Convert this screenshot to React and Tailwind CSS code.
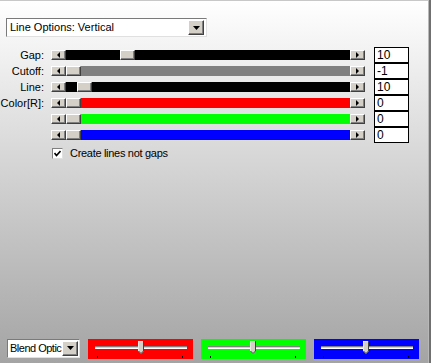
import React from 'react';

// classic 3d button face used by scroll arrows, thumbs and combo arrows
const face = 'bg-[#d4d0c8] border-t border-l border-t-white border-l-white border-b border-r border-b-[#404040] border-r-[#404040] shadow-[inset_-1px_-1px_0_#808080]';

const Tri = ({ dir }) => {
    const pts = {
        left: '3,0 3,6 0,3',
        right: '0,0 0,6 3,3',
        down: '0,0 7,0 3.5,4',
    }[dir];
    const w = dir === 'down' ? 7 : 3;
    const h = dir === 'down' ? 4 : 6;
    return (
        <svg width={w} height={h} viewBox={`0 0 ${w} ${h}`} className="block">
            <polygon points={pts} fill="#000" />
        </svg>
    );
};

const ArrowBtn = ({ dir }) => (
    <div className={`${face} w-[15px] h-full flex items-center justify-center shrink-0`}>
        <Tri dir={dir} />
    </div>
);

const Slider = ({ track, pos }) => (
    <div className="flex h-[10px] w-[314px]">
        <ArrowBtn dir="left" />
        <div className={`flex-1 flex ${track}`}>
            <div className="shrink-0" style={{ width: pos }} />
            <div className={`${face} w-[15px] h-full shrink-0`} />
        </div>
        <ArrowBtn dir="right" />
    </div>
);

const rows = [
    { label: 'Gap:', track: 'bg-black', pos: 54, value: '10' },
    { label: 'Cutoff:', track: 'bg-[#808080]', pos: 0, value: '-1' },
    { label: 'Line:', track: 'bg-black', pos: 11, value: '10' },
    { label: 'Color[R]:', track: 'bg-[#ff0000]', pos: 0, value: '0' },
    { label: '', track: 'bg-[#00ff00]', pos: 0, value: '0' },
    { label: '', track: 'bg-[#0000ff]', pos: 0, value: '0' },
];

const ColorSlider = ({ bg, thumb }) => (
    <div className={`relative w-[105px] h-[20px] ${bg}`}>
        <div className="absolute left-[7px] right-[6px] top-[7px] h-[3px] border-t border-t-[#808080] border-b border-b-white bg-[#d4d0c8]" />
        <div className="absolute bottom-[1px] left-[9px] w-px h-[2px] bg-black" />
        <div className="absolute bottom-[1px] right-[10px] w-px h-[2px] bg-black" />
        <div className="absolute top-[2px] w-[6px] h-[13px]" style={{ left: thumb }}>
            <svg width="6" height="13" viewBox="0 0 6 13" className="block">
                <polygon points="0,0 6,0 6,10 3,13 0,10" fill="#d4d0c8" />
                <polyline points="0,10 0,0 6,0" fill="none" stroke="#fff" strokeWidth="1" />
                <polyline points="5.5,0 5.5,10 3,12.5 0.5,10" fill="none" stroke="#404040" strokeWidth="1" />
            </svg>
        </div>
    </div>
);

export default function App() {
    return (
        <div className="w-[431px] h-[363px] flex font-['Liberation_Sans',Arial,sans-serif] text-[11px] text-black">
            <div className="flex-1 flex flex-col bg-gradient-to-b from-[#ffffff] to-[#a4a4a4] border-t border-t-[#c8c8c8] border-r border-r-[#b8b8b8]">
                {/* top combo */}
                <div className="mt-[17px] ml-[6px] w-[201px] h-[19px] flex items-center bg-white border-t border-l border-t-[#7a7a7a] border-l-[#7a7a7a] border-b border-r border-b-[#e0e0e0] border-r-[#e0e0e0]">
                    <span className="flex-1 pl-[3px] leading-none">Line Options: Vertical</span>
                    <div className="h-[15px] w-[16px] mr-[2px]">
                        <div className={`${face} h-full w-full flex items-center justify-center`}>
                            <Tri dir="down" />
                        </div>
                    </div>
                </div>

                {/* slider rows */}
                <div className="mt-[10px] flex flex-col">
                    {rows.map((r, i) => (
                        <div key={i} className="flex items-center h-[16px]">
                            <div className="w-[44px] text-right leading-none">{r.label}</div>
                            <div className="ml-[7px]">
                                <Slider track={r.track} pos={r.pos} />
                            </div>
                            <div className="ml-[9px] w-[35px] h-[16px] bg-white border border-black text-[12px] leading-[14px] pl-[2px]">
                                {r.value}
                            </div>
                        </div>
                    ))}
                </div>

                {/* checkbox */}
                <div className="mt-[5px] ml-[52px] flex items-center gap-[7px]">
                    <div className="w-[11px] h-[11px] bg-white border-t border-l border-t-[#808080] border-l-[#808080] border-b border-r border-b-[#e0e0e0] border-r-[#e0e0e0] flex items-center justify-center">
                        <svg width="7" height="7" viewBox="0 0 7 7" className="block">
                            <polyline points="0.5,3 2.5,5.5 6.5,1" fill="none" stroke="#000" strokeWidth="1.6" />
                        </svg>
                    </div>
                    <span className="leading-none tracking-[-0.3px]">Create lines not gaps</span>
                </div>

                <div className="flex-1" />

                {/* bottom bar */}
                <div className="flex items-center mb-[4px] ml-[7px]">
                    <div className="w-[73px] h-[19px] flex items-center bg-white border-t border-l border-t-[#7a7a7a] border-l-[#7a7a7a] border-b border-r border-b-[#e0e0e0] border-r-[#e0e0e0]">
                        <span className="flex-1 pl-[2px] whitespace-nowrap leading-none tracking-[-0.5px]">Blend Optic</span>
                        <div className="h-[15px] w-[16px] mr-[1px] shrink-0">
                            <div className={`${face} h-full w-full flex items-center justify-center`}>
                                <Tri dir="down" />
                            </div>
                        </div>
                    </div>
                    <div className="ml-[8px] flex gap-[8px] mt-[2px]">
                        <ColorSlider bg="bg-[#ff0000]" thumb={50} />
                        <ColorSlider bg="bg-[#00ff00]" thumb={49} />
                        <ColorSlider bg="bg-[#0000ff]" thumb={49} />
                    </div>
                </div>
            </div>
            <div className="w-[2px] bg-[#707070]" />
        </div>
    );
}
